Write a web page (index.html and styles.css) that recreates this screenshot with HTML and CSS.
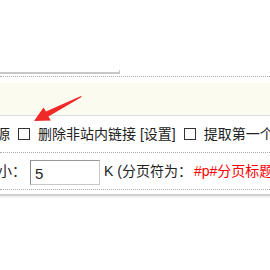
FILE: index.html
```html
<!DOCTYPE html>
<html lang="zh-CN">
<head>
    <meta charset="UTF-8">
    <title>采集设置</title>
    <link rel="stylesheet" href="styles.css">
</head>
<body>
    <div class="form-wrap">
        <div class="row row-title">
            <div class="title-input"></div>
        </div>
        <div class="row row-note">
            <div class="note-band"></div>
        </div>
        <div class="row row-options">
            <span class="label cut-left">源</span>
            <input type="checkbox" class="chk">
            <span class="label">删除非站内链接 [设置]</span>
            <input type="checkbox" class="chk">
            <span class="label">提取第一个图片为缩略图</span>
        </div>
        <div class="row row-page">
            <span class="label cut-small">小：</span>
            <input type="text" class="size-input" value="5">
            <span class="label">K (分页符为：</span>
            <span class="label red">#p#分页标题#e#</span>
        </div>
        <div class="row-end"></div>

        <svg class="arrow" width="270" height="270" viewBox="0 0 270 270">
            <polygon points="34,121 43.5,107.5 46,111.5 81,96 81.6,97 48.4,116.5 51,120.5" fill="#f02828"/>
        </svg>
    </div>
</body>
</html>
```

FILE: styles.css
```css
body {
    margin: 0;
    background: #fff;
    font-family: "Liberation Sans", "Noto Sans CJK SC", sans-serif;
    font-size: 14px;
    color: #222;
    overflow: hidden;
}

.form-wrap {
    position: relative;
    width: 270px;
    height: 270px;
    overflow: hidden;
}

.row {
    display: flex;
    align-items: center;
    white-space: nowrap;
}

.row > * {
    flex-shrink: 0;
}

.row-title {
    height: 76px;
    align-items: flex-start;
    border-bottom: 1px dotted #aaa;
}

.title-input {
    margin-top: 70px;
    width: 119px;
    height: 2px;
    border-bottom: 2px solid #c8c8c8;
    border-right: 1px solid #c8c8c8;
}

.row-note {
    height: 39px;
    padding-top: 6px;
    align-items: stretch;
    border-bottom: 1px solid #dcdcdc;
    box-sizing: border-box;
}

.row-note .note-band {
    flex: 1;
    background: #fbfcef;
}

.row-options {
    height: 36px;
    border-bottom: 1px dotted #aaa;
}

.row-page {
    height: 36px;
    border-bottom: 1px dotted #aaa;
}

.label {
    line-height: 16px;
}

.cut-left {
    margin-left: -4px;
}

.cut-small {
    margin-left: -2px;
}

.chk {
    appearance: none;
    -webkit-appearance: none;
    width: 12px;
    height: 12px;
    margin: 0 8px 0 8px;
    border: 1px solid #333;
    background: #fff;
    box-sizing: border-box;
}

.size-input {
    width: 70px;
    height: 25px;
    margin: 2px 4px 0 4px;
    padding: 2px 4px 0;
    box-sizing: border-box;
    border: 1px solid #c8c8c8;
    border-left-color: #888;
    border-top-color: #999;
    font-family: "Liberation Sans", "Noto Sans CJK SC", sans-serif;
    font-size: 15px;
    color: #222;
    outline: none;
}

.red {
    margin-left: 2px;
    color: #f00;
}

.row-end {
    margin-top: 4px;
    border-top: 2px solid #d0d0d0;
    border-bottom: 2px solid #f2f2f2;
}

.arrow {
    position: absolute;
    left: 0;
    top: 0;
    pointer-events: none;
}
```
